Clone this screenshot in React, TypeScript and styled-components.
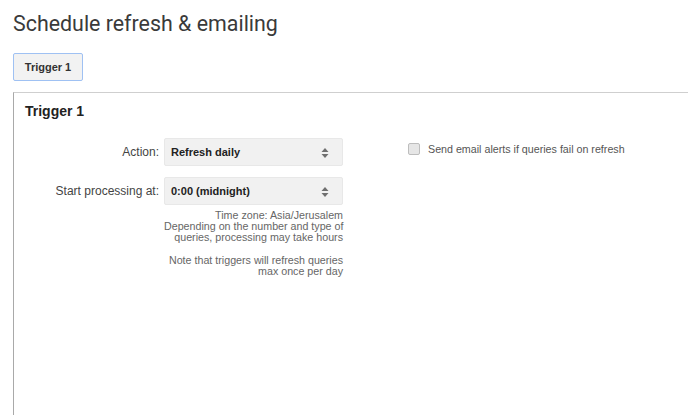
import React, { useState } from 'react';
import styled, { createGlobalStyle } from 'styled-components';

const GlobalStyle = createGlobalStyle`
  html, body {
    margin: 0;
    padding: 0;
    background: #fff;
    overflow: hidden;
  }
  body {
    font-family: 'Liberation Sans', Arial, sans-serif;
    color: #333;
  }
`;

const Page = styled.div`
  width: 688px;
  height: 415px;
  padding: 11px 0 0 13px;
  box-sizing: border-box;
  overflow: hidden;
`;

const Title = styled.h1`
  margin: 0;
  font-family: Roboto, 'Open Sans', sans-serif;
  font-weight: 400;
  font-size: 21.4px;
  line-height: 26px;
  color: #3a3a3a;
`;

const Tabs = styled.div`
  display: flex;
  margin-top: 16px;
`;

const Tab = styled.button<{ $active?: boolean }>`
  width: 70px;
  height: 28px;
  box-sizing: border-box;
  border: 1px solid ${(p) => (p.$active ? '#9fc1f3' : '#ccc')};
  border-radius: 2px;
  background: #f2f2f2;
  font-family: 'Liberation Sans', Arial, sans-serif;
  font-size: 11px;
  font-weight: 700;
  color: #333;
  padding: 0;
  cursor: pointer;
`;

const Panel = styled.section`
  margin-top: 11px;
  margin-right: -40px;
  height: 360px;
  border-top: 1px solid #cfcfcf;
  border-left: 1px solid #a9a9a9;
  padding: 10px 0 0 11px;
`;

const PanelTitle = styled.h2`
  margin: 0;
  font-size: 14px;
  line-height: 17px;
  font-weight: 700;
  color: #222;
`;

const Body = styled.div`
  display: flex;
  gap: 65px;
  margin-top: 18px;
  margin-left: -11px;
`;

const Form = styled.div`
  display: grid;
  grid-template-columns: 145px 179px;
  column-gap: 5px;
  row-gap: 11px;
  align-items: center;
`;

const Label = styled.label`
  text-align: right;
  font-size: 12px;
  color: #444;
  white-space: nowrap;
`;

const SelectBox = styled.div`
  position: relative;
  height: 28px;
  box-sizing: border-box;
  display: flex;
  align-items: center;
  padding: 0 0 0 6px;
  background: #f1f1f1;
  border: 1px solid #e8e8e8;
  border-radius: 2px;
  font-size: 11px;
  font-weight: 700;
  color: #222;

  svg {
    position: absolute;
    right: 13px;
    top: 9px;
  }
`;

const Notes = styled.div`
  grid-column: 2;
  margin-top: -6px;
  text-align: right;
  font-size: 10.7px;
  line-height: 11px;
  color: #666;
  white-space: nowrap;

  p {
    margin: 0 0 12px;
  }
`;

const CheckRow = styled.label`
  display: flex;
  align-items: center;
  gap: 8px;
  height: 11px;
  margin-top: 5px;
  font-size: 10.7px;
  color: #555;
  white-space: nowrap;
  cursor: pointer;
`;

const Box = styled.span<{ $checked: boolean }>`
  width: 10px;
  height: 10px;
  border: 1px solid #bdbdbd;
  border-radius: 2px;
  background: ${(p) => (p.$checked ? '#4a8af4' : '#e6e6e6')};
`;

const Arrows = () => (
  <svg width="8" height="10" viewBox="0 0 8 10">
    <path d="M4 0 L7.5 4 L0.5 4 Z" fill="#6f6f6f" />
    <path d="M4 10 L7.5 6 L0.5 6 Z" fill="#6f6f6f" />
  </svg>
);

const Select = ({ value }: { value: string }) => (
  <SelectBox>
    {value}
    <Arrows />
  </SelectBox>
);

export default function App() {
  const [alerts, setAlerts] = useState(false);

  return (
    <>
      <GlobalStyle />
      <Page>
        <Title>Schedule refresh &amp; emailing</Title>
        <Tabs>
          <Tab $active>Trigger 1</Tab>
        </Tabs>
        <Panel>
          <PanelTitle>Trigger 1</PanelTitle>
          <Body>
            <Form>
              <Label>Action:</Label>
              <Select value="Refresh daily" />
              <Label>Start processing at:</Label>
              <Select value="0:00 (midnight)" />
              <Notes>
                <p>
                  Time zone: Asia/Jerusalem
                  <br />
                  Depending on the number and type of
                  <br />
                  queries, processing may take hours
                </p>
                <p>
                  Note that triggers will refresh queries
                  <br />
                  max once per day
                </p>
              </Notes>
            </Form>
            <div>
              <CheckRow onClick={() => setAlerts(!alerts)}>
                <Box $checked={alerts} />
                Send email alerts if queries fail on refresh
              </CheckRow>
            </div>
          </Body>
        </Panel>
      </Page>
    </>
  );
}
